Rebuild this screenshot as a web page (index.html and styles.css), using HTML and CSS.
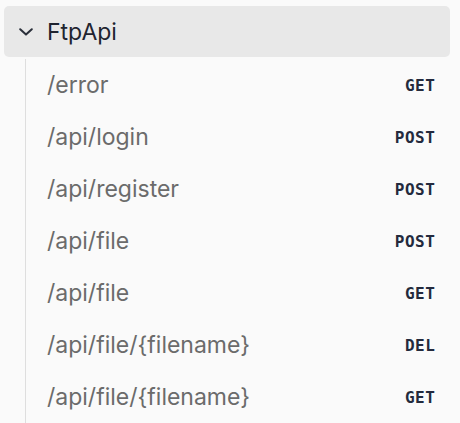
FILE: index.html
```html
<!DOCTYPE html>
<html>
<head>
<meta charset="utf-8">
<link rel="stylesheet" href="styles.css">
</head>
<body>
<div class="group">
  <div class="group-head">
    <svg class="chev" width="14" height="8" viewBox="0 0 14 8"><path d="M1.2 1.2 L7 6.6 L12.8 1.2" fill="none" stroke="#2a2f3a" stroke-width="2" stroke-linecap="round" stroke-linejoin="round"/></svg>
    <span class="group-name">FtpApi</span>
  </div>
  <ul class="ops">
    <li class="op"><span class="path">/error</span><span class="method">GET</span></li>
    <li class="op"><span class="path">/api/login</span><span class="method">POST</span></li>
    <li class="op"><span class="path">/api/register</span><span class="method">POST</span></li>
    <li class="op"><span class="path">/api/file</span><span class="method">POST</span></li>
    <li class="op"><span class="path">/api/file</span><span class="method">GET</span></li>
    <li class="op"><span class="path">/api/file/{filename}</span><span class="method">DEL</span></li>
    <li class="op"><span class="path">/api/file/{filename}</span><span class="method">GET</span></li>
  </ul>
</div>
</body>
</html>
```
FILE: styles.css
```css
html, body {
  margin: 0;
  padding: 0;
  background: #fafafa;
}
body {
  padding: 6px 10px 0 4px;
  font-family: Inter, "Noto Sans", sans-serif;
}
.group-head {
  height: 51px;
  background: #e8e8e8;
  border-radius: 5px;
  display: flex;
  align-items: center;
  padding-left: 15px;
  box-sizing: border-box;
}
.chev {
  display: block;
  margin-right: 14px;
  margin-top: 1px;
}
.group-name {
  font-size: 23px;
  color: #1f2430;
}
.ops {
  list-style: none;
  margin: 2px 0 0 21px;
  padding: 0;
  border-left: 1px solid #dedede;
}
.op {
  height: 52px;
  display: flex;
  align-items: center;
  justify-content: space-between;
  padding: 0 15px 0 21px;
}
.path {
  font-size: 23px;
  color: #6b6b6b;
}
.method {
  font-family: "DejaVu Sans Mono", monospace;
  font-weight: bold;
  font-size: 16px;
  letter-spacing: 0.6px;
  margin-right: -0.6px;
  color: #232a3d;
}
```
